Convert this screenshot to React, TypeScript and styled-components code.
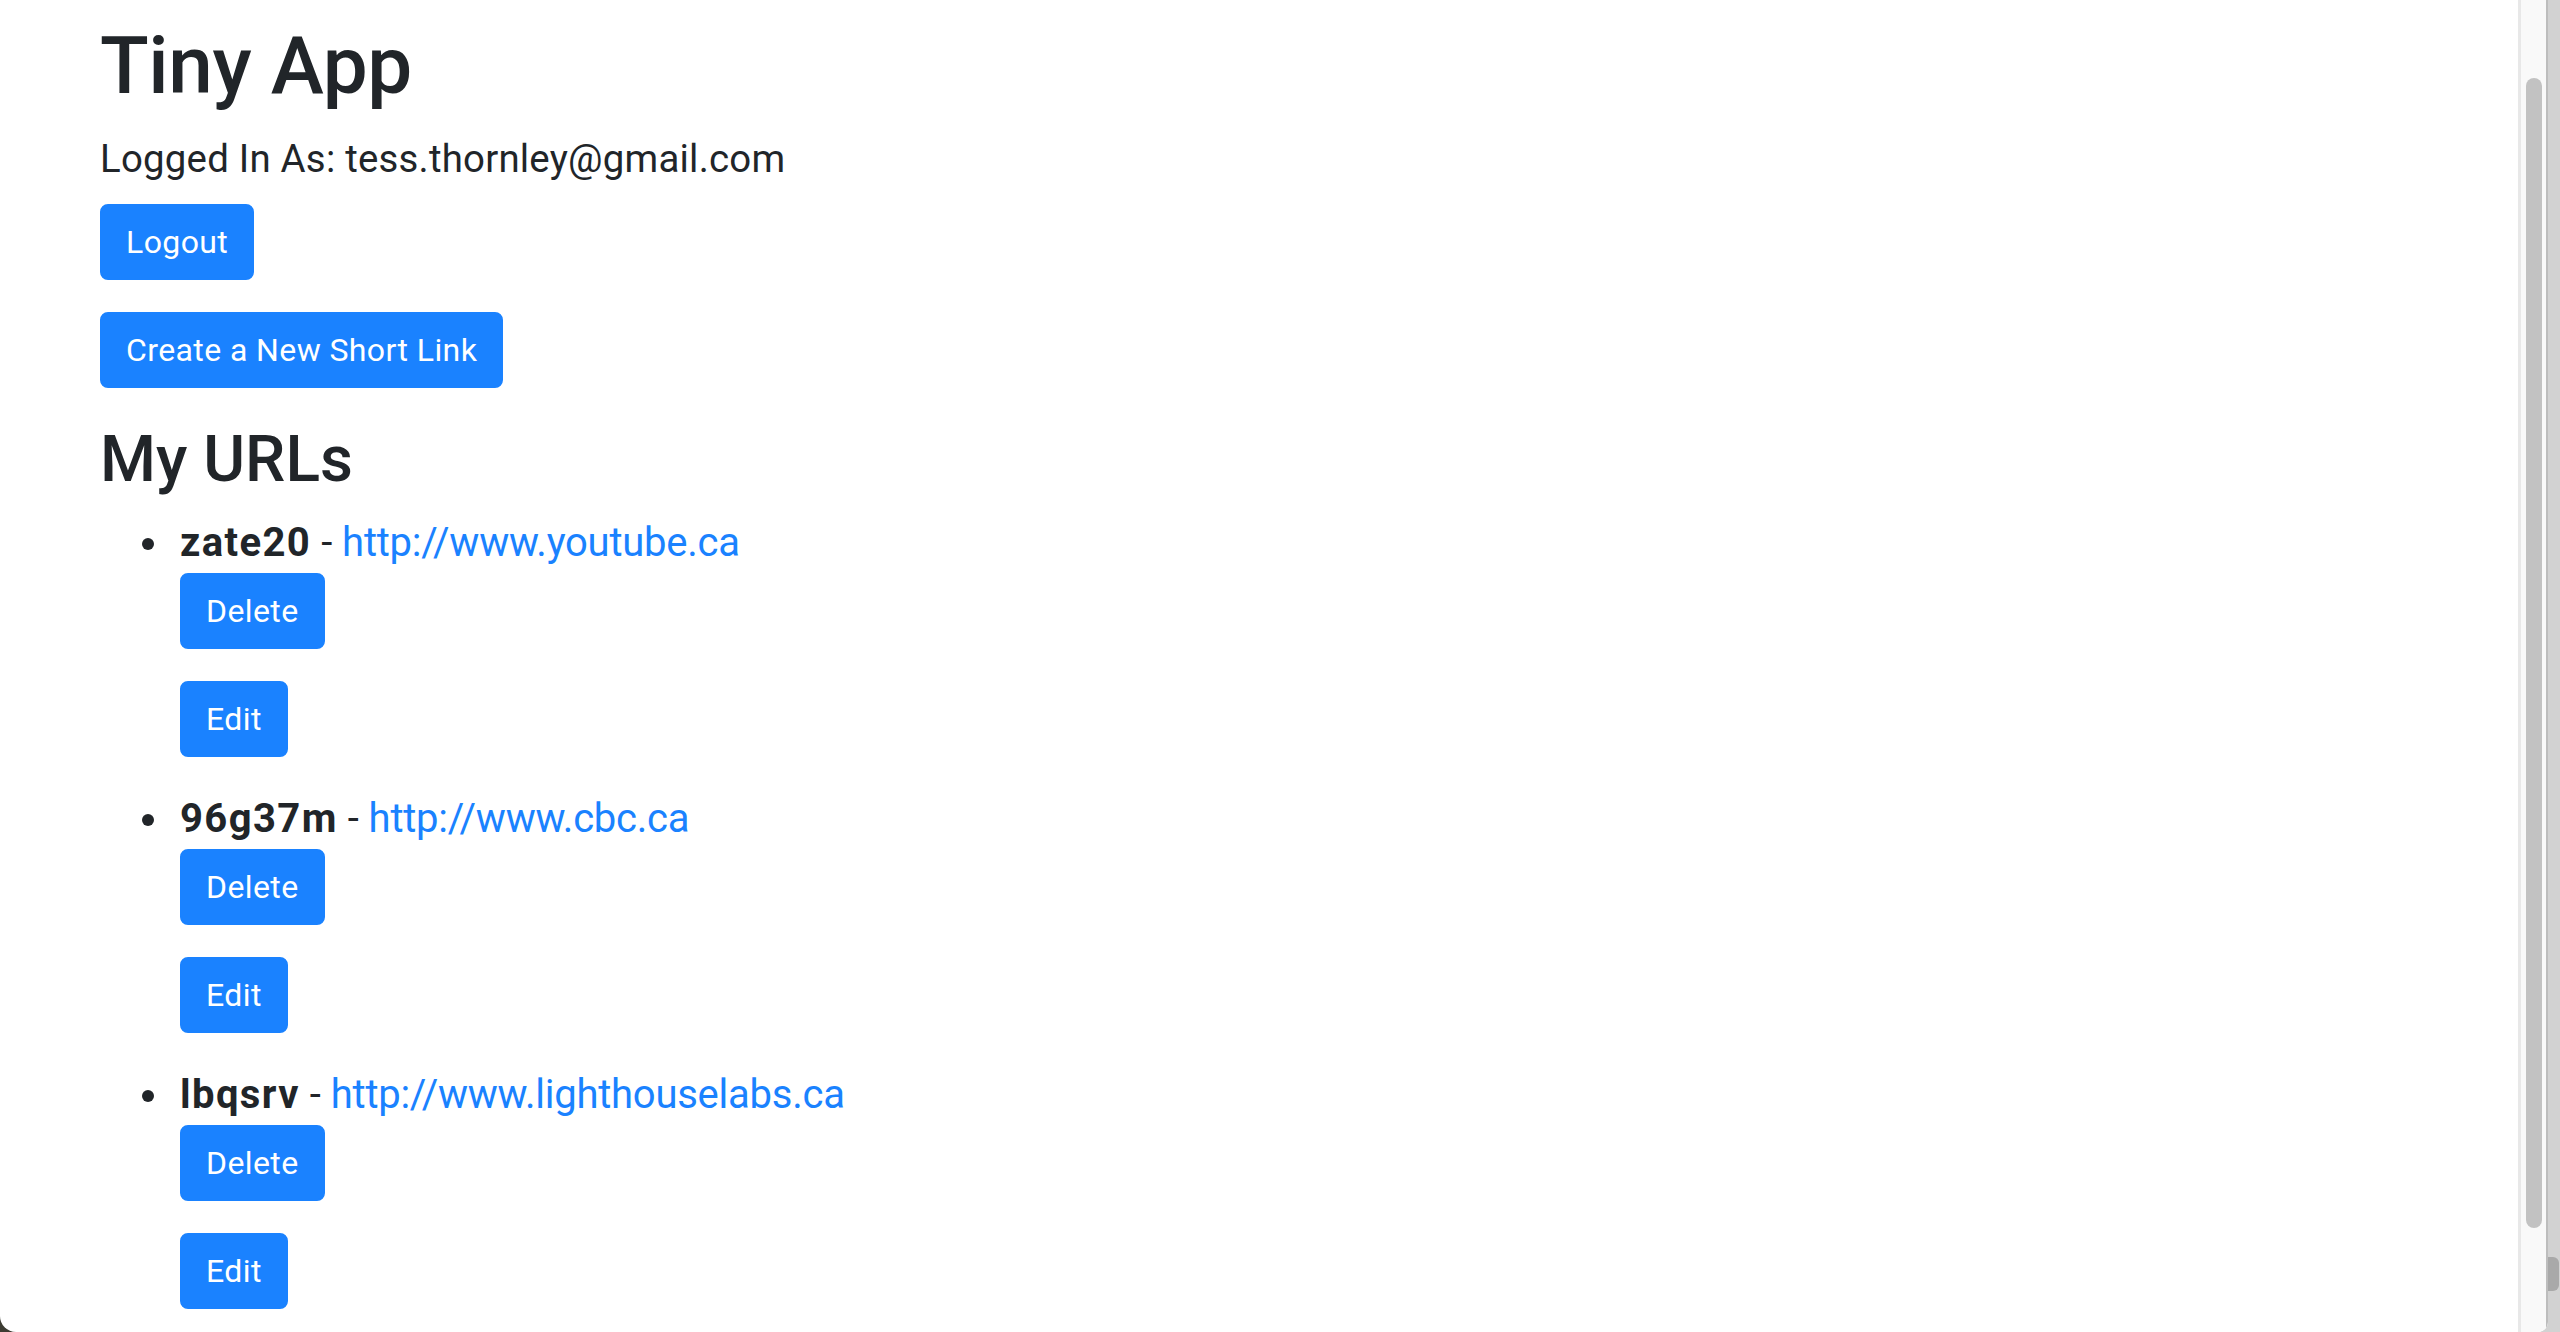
import React from "react";
import styled, { createGlobalStyle } from "styled-components";

const GlobalStyle = createGlobalStyle`
  html, body {
    margin: 0;
    padding: 0;
    height: 100%;
    overflow: hidden;
  }
  body {
    font-family: Roboto, "Liberation Sans", Arial, sans-serif;
    color: #212529;
    background: linear-gradient(to right, #3d3c33 0 60px, #d2d2d2 60px);
  }
  #root { height: 100%; }
`;

const BLUE = "#1a82ff";

const Screen = styled.div`
  display: flex;
  height: 1332px;
`;

const BrowserWindow = styled.div`
  flex: 1;
  display: flex;
  min-width: 0;
  background: #ffffff;
  border-radius: 0 0 10px 16px;
  overflow: hidden;
`;

const Page = styled.main`
  flex: 1;
  min-width: 0;
  padding: 18px 0 0 100px;
  overflow: hidden;
`;

const Track = styled.div`
  width: 25px;
  flex: none;
  display: flex;
  justify-content: center;
  border-left: 3px solid #e8e8e8;
  border-right: 2px solid #bdbdbd;
  background: #f9f9f9;
`;

const Thumb = styled.div`
  width: 16px;
  height: 1150px;
  margin-top: 78px;
  border-radius: 8px;
  background: #c2c2c2;
`;

const BackStrip = styled.div`
  width: 12px;
  flex: none;
  display: flex;
  flex-direction: column;
  align-items: flex-start;
`;

const BackThumb = styled.div`
  width: 11px;
  height: 34px;
  margin-top: 1257px;
  border-radius: 0 6px 6px 0;
  background: #a9a9a9;
`;

const Title = styled.h1`
  margin: 0 0 16px;
  font-size: 80px;
  line-height: 96px;
  font-weight: 500;
  letter-spacing: -0.4px;
`;

const LoggedIn = styled.p`
  margin: 0 0 16px;
  font-size: 38.4px;
  line-height: 57.6px;
  font-weight: 400;
  letter-spacing: 0.22px;
`;

const ActionForm = styled.form`
  margin: 0 0 32px;
`;

const Button = styled.button`
  display: inline-block;
  box-sizing: border-box;
  height: 76px;
  padding: 12px 24px;
  border: 2px solid ${BLUE};
  border-radius: 8px;
  background: ${BLUE};
  color: #ffffff;
  font-family: Roboto, "Liberation Sans", Arial, sans-serif;
  font-size: 32px;
  line-height: 48px;
  font-weight: 400;
  letter-spacing: 0.4px;
  cursor: pointer;
`;

const SectionTitle = styled.h2`
  margin: 0 0 15px;
  padding-top: 2px;
  font-size: 64px;
  line-height: 76.8px;
  font-weight: 500;
`;

const UrlList = styled.ul`
  margin: 0;
  padding-left: 80px;
  list-style: none;
`;

const UrlItem = styled.li`
  position: relative;
  font-size: 40px;
  line-height: 60px;

  &::before {
    content: "";
    position: absolute;
    left: -38px;
    top: 25px;
    width: 12px;
    height: 12px;
    border-radius: 50%;
    background: #212529;
  }
`;

const ShortCode = styled.b`
  font-weight: 700;
  letter-spacing: 1.4px;
`;

const LongLink = styled.a`
  color: ${BLUE};
  text-decoration: none;
  letter-spacing: -0.25px;
`;

const urls = [
  { id: "zate20", long: "http://www.youtube.ca" },
  { id: "96g37m", long: "http://www.cbc.ca" },
  { id: "lbqsrv", long: "http://www.lighthouselabs.ca" },
];

export default function App() {
  return (
    <>
      <GlobalStyle />
      <Screen>
        <BrowserWindow>
          <Page>
            <Title>Tiny App</Title>
            <LoggedIn>Logged In As: tess.thornley@gmail.com</LoggedIn>
            <ActionForm onSubmit={(e) => e.preventDefault()}>
              <Button type="submit">Logout</Button>
            </ActionForm>
            <ActionForm onSubmit={(e) => e.preventDefault()}>
              <Button type="submit">Create a New Short Link</Button>
            </ActionForm>
            <SectionTitle>My URLs</SectionTitle>
            <UrlList>
              {urls.map((u) => (
                <UrlItem key={u.id}>
                  <ShortCode>{u.id}</ShortCode> - <LongLink href={u.long}>{u.long}</LongLink>
                  <ActionForm onSubmit={(e) => e.preventDefault()}>
                    <Button type="submit">Delete</Button>
                  </ActionForm>
                  <ActionForm onSubmit={(e) => e.preventDefault()}>
                    <Button type="submit">Edit</Button>
                  </ActionForm>
                </UrlItem>
              ))}
            </UrlList>
          </Page>
          <Track>
            <Thumb />
          </Track>
        </BrowserWindow>
        <BackStrip>
          <BackThumb />
        </BackStrip>
      </Screen>
    </>
  );
}
